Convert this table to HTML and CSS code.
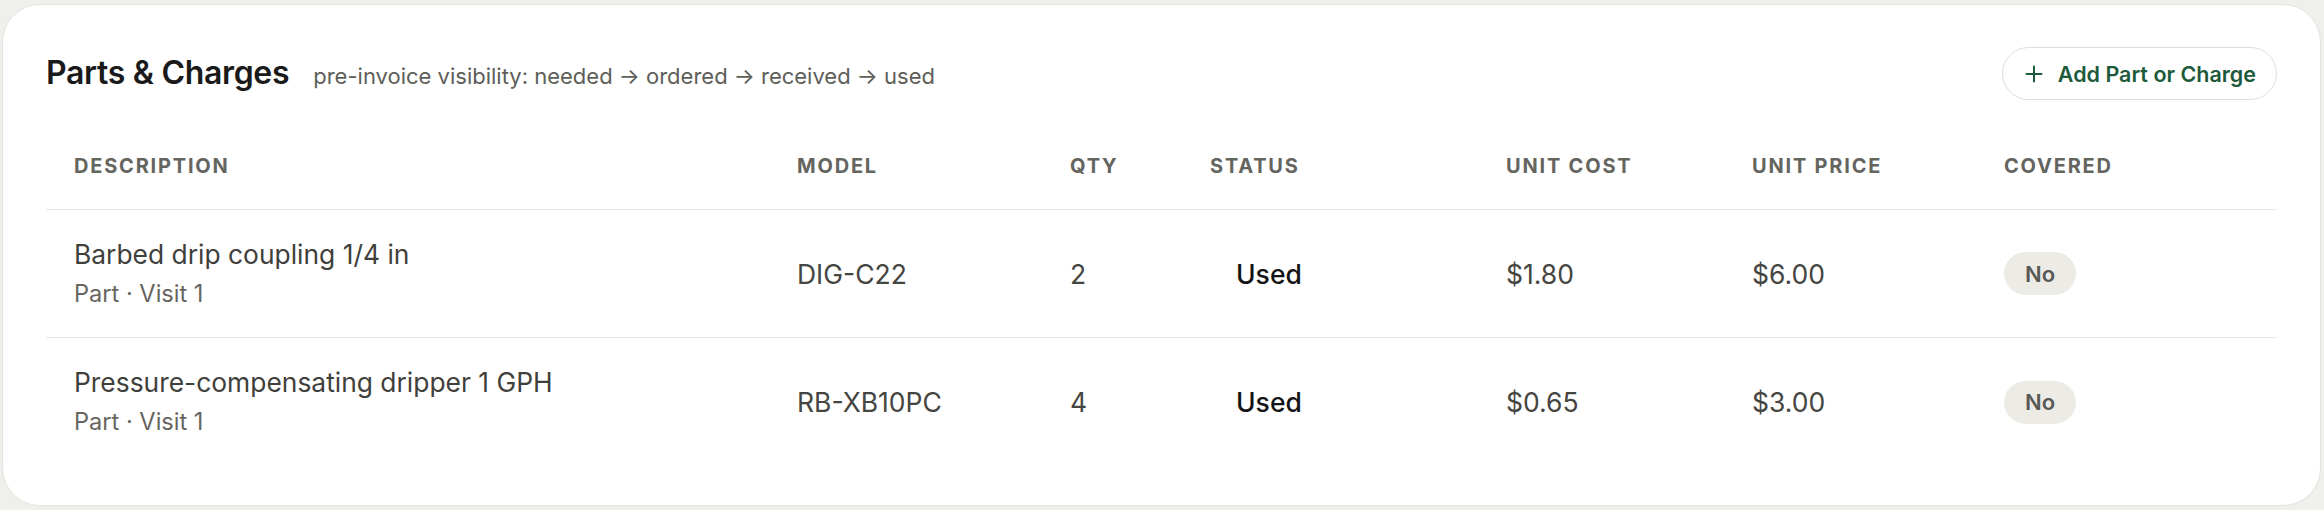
FILE: index.html
```html
<!DOCTYPE html>
<html>
<head>
<meta charset="utf-8">
<link rel="stylesheet" href="styles.css">
</head>
<body>
<section class="card">
  <header class="card-head">
    <div class="titles">
      <h2 class="title">Parts &amp; Charges</h2>
      <span class="subtitle">pre-invoice visibility: needed → ordered → received → used</span>
    </div>
    <button class="add-btn" type="button">
      <svg class="plus" viewBox="0 0 18 18" width="18" height="18"><path d="M9 1.5v15M1.5 9h15" stroke="currentColor" stroke-width="2" fill="none" stroke-linecap="round"/></svg>
      <span>Add Part or Charge</span>
    </button>
  </header>
  <div class="table">
    <div class="row head">
      <div class="cell">DESCRIPTION</div>
      <div class="cell">MODEL</div>
      <div class="cell">QTY</div>
      <div class="cell">STATUS</div>
      <div class="cell">UNIT COST</div>
      <div class="cell">UNIT PRICE</div>
      <div class="cell">COVERED</div>
    </div>
    <div class="row item">
      <div class="cell desc">
        <div class="name">Barbed drip coupling 1/4 in</div>
        <div class="meta">Part · Visit 1</div>
      </div>
      <div class="cell">DIG-C22</div>
      <div class="cell">2</div>
      <div class="cell"><span class="status">Used</span></div>
      <div class="cell">$1.80</div>
      <div class="cell">$6.00</div>
      <div class="cell"><span class="pill">No</span></div>
    </div>
    <div class="row item">
      <div class="cell desc">
        <div class="name">Pressure-compensating dripper 1 GPH</div>
        <div class="meta">Part · Visit 1</div>
      </div>
      <div class="cell">RB-XB10PC</div>
      <div class="cell">4</div>
      <div class="cell"><span class="status">Used</span></div>
      <div class="cell">$0.65</div>
      <div class="cell">$3.00</div>
      <div class="cell"><span class="pill">No</span></div>
    </div>
  </div>
</section>
</body>
</html>
```
FILE: styles.css
```css
* { box-sizing: border-box; }
html, body { margin: 0; padding: 0; }
body {
  background: #efefeb;
  padding: 4px 3px 4px 2px;
  font-family: Inter, "Liberation Sans", sans-serif;
  color: #3d3d3a;
}
.card {
  background: #ffffff;
  border: 1px solid #e4e3de;
  border-radius: 38px;
  height: 502px;
  padding: 42px 43px 0 43px;
}
.card-head {
  display: flex;
  align-items: center;
  justify-content: space-between;
  height: 53px;
}
.titles {
  display: flex;
  align-items: baseline;
  gap: 24px;
  margin-top: -2px;
}
.title {
  margin: 0;
  font-size: 32px;
  font-weight: 600;
  color: #1a1a1a;
  letter-spacing: -0.01em;
}
.subtitle {
  font-size: 22px;
  color: #5e5e59;
}
.add-btn {
  display: flex;
  align-items: center;
  gap: 15px;
  height: 53px;
  padding: 0 20px 0 22px;
  border: 1.5px solid #dfded8;
  border-radius: 999px;
  background: #fff;
  color: #1d5a3b;
  font-family: inherit;
  font-size: 21.5px;
  font-weight: 600;
}
.plus { display: block; }
.table {
  margin-top: 23px;
}
.row {
  display: grid;
  grid-template-columns: 723px 273px 140px 296px 246px 252px 1fr;
  align-items: center;
}
.row.head {
  height: 87px;
  border-bottom: 1px solid #e8e7e3;
}
.row.item {
  height: 128px;
  border-bottom: 1px solid #e8e7e3;
}
.row.item:last-child { border-bottom: none; }
.cell {
  padding: 0 28px;
  font-size: 26.5px;
  color: #454541;
}
.head .cell {
  font-size: 20px;
  font-weight: 700;
  letter-spacing: 0.09em;
  color: #65655f;
}
.desc {
  display: flex;
  flex-direction: column;
  gap: 6px;
}
.name {
  font-size: 26.4px;
  line-height: 34px;
  color: #3f3f3b;
}
.meta {
  font-size: 23.6px;
  line-height: 34px;
  color: #66665f;
}
.status {
  display: inline-block;
  padding-left: 26px;
  font-weight: 500;
  color: #141414;
}
.pill {
  display: inline-flex;
  align-items: center;
  justify-content: center;
  width: 72px;
  height: 43px;
  border-radius: 999px;
  background: #ecebe6;
  color: #5a5a55;
  font-size: 22px;
  font-weight: 600;
}
```
